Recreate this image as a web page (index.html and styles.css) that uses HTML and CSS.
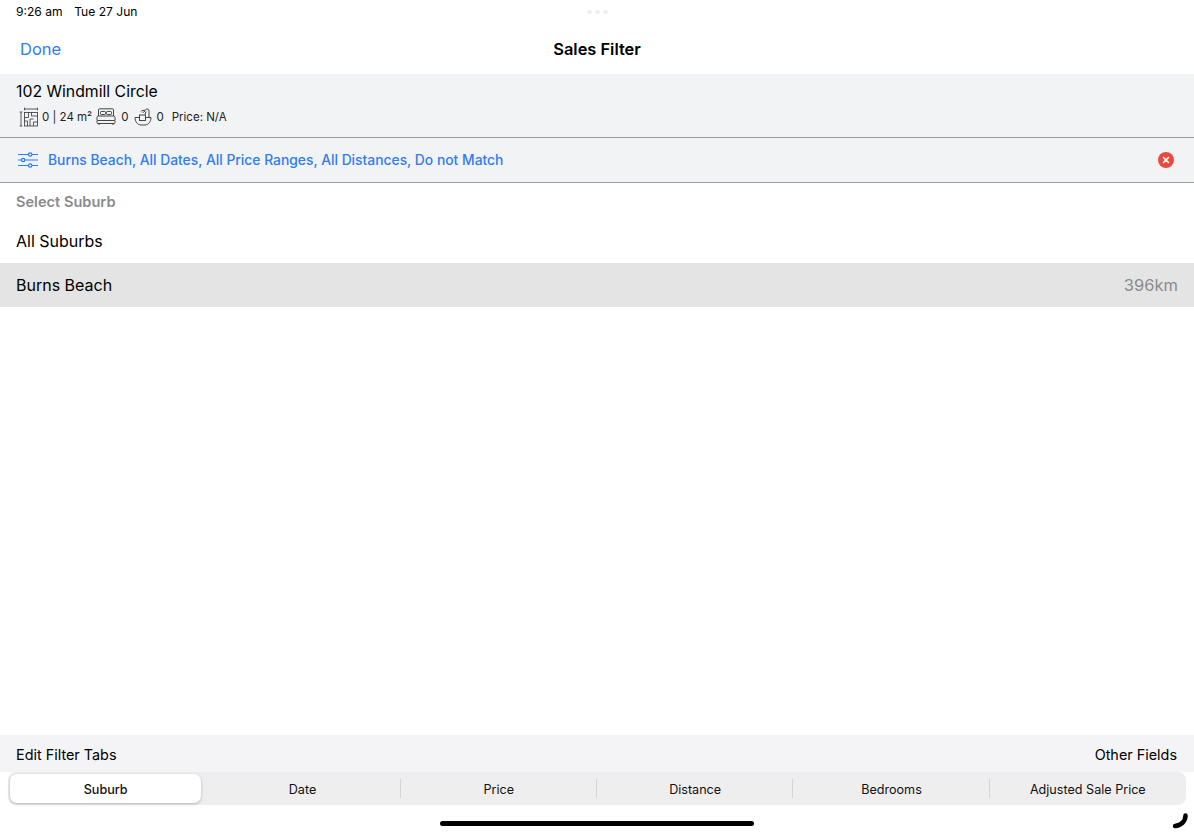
FILE: index.html
```html
<!DOCTYPE html>
<html lang="en">
<head>
<meta charset="utf-8">
<title>Sales Filter</title>
<link rel="stylesheet" href="styles.css">
</head>
<body>
<div class="app">
  <div class="status"><span>9:26 am</span><span>Tue 27 Jun</span></div>
  <div class="dots"><i></i><i></i><i></i></div>
  <nav class="nav">
    <a class="done">Done</a>
    <h1 class="title">Sales Filter</h1>
  </nav>
  <section class="property">
    <div class="address">102 Windmill Circle</div>
    <div class="facts">
      <svg class="ico-plan" width="20" height="20" viewBox="0 0 20 20" fill="none" stroke="#333" stroke-width="0.8">
        <path d="M5.500 2h13M5.500 .6v2.800M18.500 .6v2.800M2 5v14M.7 5h2.600M.7 19h2.600"/>
        <rect x="5.500" y="5.500" width="13" height="13.500"/>
        <path d="M5.500 10.500h4V5.500M12.500 5.500V9h6M5.500 14h3v5M11 19v-7h3.500M14.500 19v-4h4"/>
      </svg>
      <span class="f1">0 | 24 m²</span>
      <svg class="ico-bed" width="20" height="18" viewBox="0 0 20 18" fill="none" stroke="#333" stroke-width="0.9">
        <path d="M2.500 8V2Q2.500 .8 3.700 .8h12.600q1.200 0 1.200 1.200V8"/>
        <rect x="4.500" y="3.500" width="5" height="3" rx=".8"/>
        <rect x="10.500" y="3.500" width="5" height="3" rx=".8"/>
        <path d="M1 12.500V9.500Q1 8 2.500 8h15Q19 8 19 9.500V12.500"/>
        <rect x="1" y="12.500" width="18" height="3" rx=".8"/>
        <path d="M3 15.500v1.500M17 15.500v1.500"/>
      </svg>
      <span class="f2">0</span>
      <svg class="ico-bath" width="18" height="18" viewBox="0 0 18 18" fill="none" stroke="#333" stroke-width="0.9">
        <path d="M1 9.500h4.500M11.500 9.500H17c0 4-2.500 7.500-6 7.500H7c-3.500 0-6-3.500-6-7.500"/>
        <path d="M15 9.500V3q0-2-1.800-2-1.200 0-2 1.200L7.500 2.700"/>
        <path d="M9 4.500l2-1.500M11 6.500l1-3M7 3.500l1 1"/>
        <rect x="5.500" y="7" width="6" height="5.500"/>
      </svg>
      <span class="f3">0</span>
      <span class="price">Price: N/A</span>
    </div>
  </section>
  <section class="summary">
    <svg width="20" height="16" viewBox="0 0 20 16" fill="none" stroke="#2f7cf6" stroke-width="1.200">
      <path d="M0 2.500h10.500M14 2.500h6M0 8h3.500M7 8h13M0 13.500h10.500M14 13.500h6"/>
      <circle cx="12.200" cy="2.500" r="1.700"/>
      <circle cx="5.200" cy="8" r="1.700"/>
      <circle cx="12.200" cy="13.500" r="1.700"/>
    </svg>
    <span class="summary-text">Burns Beach, All Dates, All Price Ranges, All Distances, Do not Match</span>
    <svg class="clear" width="16" height="16" viewBox="0 0 17 17">
      <circle cx="8.500" cy="8.500" r="8.500" fill="#ea4a3c"/>
      <path d="M5.900 5.900l5.200 5.200M11.100 5.900l-5.200 5.200" stroke="#fff" stroke-width="1.700" stroke-linecap="round"/>
    </svg>
  </section>
  <div class="section-head">Select Suburb</div>
  <ul class="list">
    <li class="row all">All Suburbs</li>
    <li class="row selected"><span>Burns Beach</span><span class="dist">396km</span></li>
  </ul>
  <div class="spacer"></div>
  <div class="tools"><span>Edit Filter Tabs</span><span>Other Fields</span></div>
  <div class="tabs">
    <div class="tab active">Suburb</div>
    <div class="tab">Date</div>
    <div class="tab sep">Price</div>
    <div class="tab sep">Distance</div>
    <div class="tab sep">Bedrooms</div>
    <div class="tab sep">Adjusted Sale Price</div>
  </div>
  <div class="home"><div class="home-bar"></div>
    <svg class="corner" width="18" height="18" viewBox="0 0 18 18" fill="none"><path d="M14.500 2.500C14.500 8 10.500 12.500 4 13" stroke="#000" stroke-width="4.500" stroke-linecap="round"/></svg>
  </div>
</div>
</body>
</html>
```
FILE: styles.css
```css
* { box-sizing: border-box; }
html, body { margin: 0; padding: 0; background: #fff; }
body { font-family: Inter, "Liberation Sans", sans-serif; color: #000; }
.app { position: relative; width: 1194px; height: 834px; display: flex; flex-direction: column; overflow: hidden; }
.status { height: 24px; padding: 5px 0 0 16px; display: flex; gap: 11.500px; font-size: 12.100px; line-height: 14px; font-weight: 400; }
.dots { position: absolute; left: 587px; top: 10px; display: flex; gap: 3px; }
.dots i { width: 5px; height: 4px; border-radius: 50%; background: #eee; }
.nav { position: relative; height: 50px; display: flex; align-items: center; justify-content: center; }
.done { position: absolute; left: 20px; top: 15px; font-size: 16.500px; line-height: 20px; color: #2f7cf6; }
.title { margin: 0; font-size: 16.400px; line-height: 20px; font-weight: 600; }
.property { height: 64px; background: #f2f3f5; border-bottom: 1px solid #9d9d9d; padding: 8px 16px 0; }
.address { font-size: 15.800px; line-height: 20px; }
.facts { display: flex; align-items: center; height: 20px; margin-top: 5px; font-size: 11.500px; color: #222; padding-left: 3px; }
.f1 { margin-left: 3px; }
.ico-bed { margin-left: 4px; }
.f2 { margin-left: 5px; }
.ico-bath { margin-left: 6px; }
.f3 { margin-left: 4px; }
.price { margin-left: 8px; }
.summary { height: 45px; background: #f2f3f5; border-bottom: 1px solid #9d9d9d; display: flex; align-items: center; padding: 0 20px 0 18px; gap: 10px; }
.summary-text { flex: 1; font-size: 13.850px; font-weight: 450; color: #2f7cf6; }
.section-head { height: 37px; padding: 11px 16px 0; font-size: 14.600px; line-height: 16px; font-weight: 600; color: #8a8a8e; }
.list { list-style: none; margin: 0; padding: 0; }
.row { height: 43px; padding: 0 16px; display: flex; align-items: center; justify-content: space-between; font-size: 16px; }
.row.all { padding-bottom: 1px; }
.row.selected { height: 44px; background: #e4e4e4; }
.dist { color: #8a8a8e; font-size: 16.500px; }
.spacer { flex: 1; }
.tools { height: 37px; background: #f4f4f6; padding: 1px 17px 0 16px; display: flex; align-items: center; justify-content: space-between; font-size: 14.400px; }
.tabs { height: 33px; margin: 0 8px; border-radius: 8px; background: #eeeeef; display: grid; grid-template-columns: repeat(6, 1fr); }
.tab { position: relative; display: flex; align-items: center; justify-content: center; padding-top: 1px; font-size: 12.600px; font-weight: 400; color: #111; }
.tab.active { margin: 2px 3px 2px 2px; background: #fff; border-radius: 7px; box-shadow: 0 1px 3px rgba(0,0,0,.25); font-weight: 500; }
.tab.sep::before { content: ""; position: absolute; left: -1px; top: 7px; bottom: 7px; width: 1px; background: #d4d4d6; }
.home { position: relative; height: 29px; }
.home-bar { position: absolute; left: 440px; top: 16px; width: 314px; height: 5px; border-radius: 3px; background: #000; }
.corner { position: absolute; left: 1171px; top: 8px; }
```
